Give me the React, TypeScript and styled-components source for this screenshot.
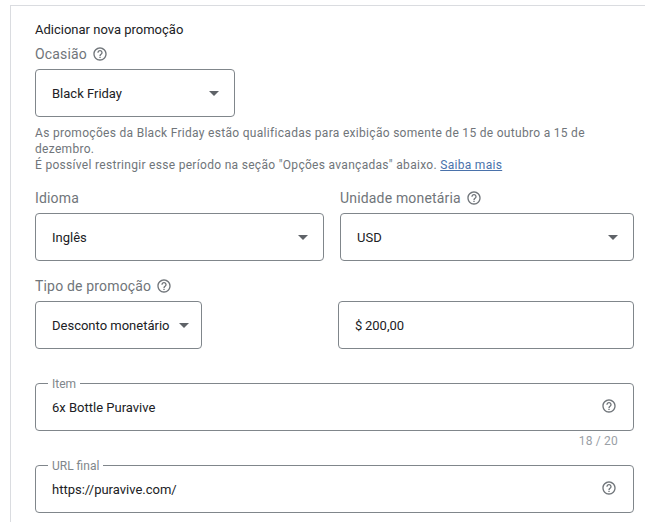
import styled, { createGlobalStyle } from "styled-components";

const GlobalStyle = createGlobalStyle`
  html, body {
    margin: 0;
    padding: 0;
    background: #fff;
    font-family: Roboto, "Liberation Sans", sans-serif;
  }
`;

const Card = styled.div`
  box-sizing: border-box;
  width: 635px;
  height: 517px;
  margin: 5px 0 0 10px;
  padding: 16px 0 0 24px;
  border-top: 1px solid #dadce0;
  border-left: 1px solid #dadce0;
  overflow: hidden;
`;

const Form = styled.div`
  width: 599px;
`;

const Title = styled.div`
  height: 16px;
  font-size: 13px;
  line-height: 16px;
  color: #202124;
`;

const FieldLabel = styled.div<{ $top?: number }>`
  display: flex;
  align-items: center;
  gap: 5px;
  height: 20px;
  margin-top: ${(props) => props.$top ?? 0}px;
  font-size: 14px;
  line-height: 20px;
  letter-spacing: 0.17px;
  color: #70757a;
`;

const Box = styled.div<{ $width?: string }>`
  box-sizing: border-box;
  display: flex;
  align-items: center;
  justify-content: space-between;
  width: ${(props) => props.$width || "100%"};
  height: 48px;
  border: 1px solid #80868b;
  border-radius: 4px;
  background: #fff;
  font-size: 13px;
  color: #202124;
`;

const SelectBox = styled(Box)<{ $arrowRight?: number }>`
  padding: 0 ${(props) => props.$arrowRight ?? 15}px 0 16px;
  margin-top: 5px;
`;

const Arrow = styled.span`
  width: 0;
  height: 0;
  border-left: 5px solid transparent;
  border-right: 5px solid transparent;
  border-top: 5px solid #5f6368;
`;

const Hint = styled.p`
  margin: 8px 0 0;
  font-size: 12px;
  line-height: 16px;
  letter-spacing: 0.3px;
  color: #70757a;
`;

const Link = styled.a`
  color: #4a72ab;
  text-decoration: underline;
`;

const Row = styled.div<{ $columns: string; $gap: number; $top: number }>`
  display: grid;
  grid-template-columns: ${(props) => props.$columns};
  column-gap: ${(props) => props.$gap}px;
  margin-top: ${(props) => props.$top}px;
`;

const AmountBox = styled(Box)`
  margin-top: 25px;
  padding-left: 16px;
`;

const OutlinedField = styled.fieldset<{ $top: number }>`
  box-sizing: border-box;
  display: flex;
  align-items: flex-start;
  justify-content: space-between;
  width: 100%;
  height: 56px;
  margin: ${(props) => props.$top}px 0 0;
  padding: 0 16px;
  border: 1px solid #80868b;
  border-radius: 4px;
  font-size: 13px;
  color: #202124;
`;

const Legend = styled.legend`
  padding: 2px 4px 0;
  margin-left: -4px;
  font-size: 12px;
  line-height: 14px;
  color: #80868b;
`;

const FieldContent = styled.div`
  display: flex;
  align-items: center;
  justify-content: space-between;
  width: 100%;
  height: 20px;
  margin-top: 6px;
`;

const FieldIcon = styled.span`
  display: flex;
  margin-bottom: 2px;
`;

const Counter = styled.div`
  height: 14px;
  margin-top: 3px;
  padding-right: 16px;
  text-align: right;
  font-size: 12px;
  line-height: 14px;
  letter-spacing: 0.2px;
  color: #9aa0a6;
`;

function HelpIcon() {
  return (
    <svg width={16} height={16} viewBox="0 0 24 24" fill="#70757a" style={{ flex: "none" }}>
      <path d="M11 18h2v-2h-2v2zm1-16C6.48 2 2 6.48 2 12s4.48 10 10 10 10-4.48 10-10S17.52 2 12 2zm0 18c-4.41 0-8-3.59-8-8s3.59-8 8-8 8 3.59 8 8-3.59 8-8 8zm0-14c-2.21 0-4 1.79-4 4h2c0-1.1.9-2 2-2s2 .9 2 2c0 2-3 1.75-3 5h2c0-2.25 3-2.5 3-5 0-2.21-1.79-4-4-4z" />
    </svg>
  );
}

export default function App() {
  return (
    <>
      <GlobalStyle />
      <Card>
        <Form>
          <Title>Adicionar nova promoção</Title>
          <FieldLabel $top={6}>
            Ocasião <HelpIcon />
          </FieldLabel>
          <SelectBox $width="200px" $arrowRight={15}>
            Black Friday <Arrow />
          </SelectBox>
          <Hint>
            As promoções da Black Friday estão qualificadas para exibição somente de 15 de outubro a 15 de
            dezembro.
            <br />É possível restringir esse período na seção "Opções avançadas" abaixo. <Link>Saiba mais</Link>
          </Hint>
          <Row $columns="289px 294px" $gap={16} $top={15}>
            <div>
              <FieldLabel>Idioma</FieldLabel>
              <SelectBox>
                Inglês <Arrow />
              </SelectBox>
            </div>
            <div>
              <FieldLabel>
                Unidade monetária <HelpIcon />
              </FieldLabel>
              <SelectBox>
                USD <Arrow />
              </SelectBox>
            </div>
          </Row>
          <Row $columns="167px 296px" $gap={136} $top={15}>
            <div>
              <FieldLabel>
                Tipo de promoção <HelpIcon />
              </FieldLabel>
              <SelectBox $arrowRight={12}>
                Desconto monetário <Arrow />
              </SelectBox>
            </div>
            <AmountBox>$&#8201;200,00</AmountBox>
          </Row>
          <OutlinedField $top={26}>
            <Legend>Item</Legend>
            <FieldContent>
              6x Bottle Puravive
              <FieldIcon>
                <HelpIcon />
              </FieldIcon>
            </FieldContent>
          </OutlinedField>
          <Counter>18 / 20</Counter>
          <OutlinedField $top={9}>
            <Legend>URL final</Legend>
            <FieldContent>
              https://puravive.com/
              <FieldIcon>
                <HelpIcon />
              </FieldIcon>
            </FieldContent>
          </OutlinedField>
        </Form>
      </Card>
    </>
  );
}
